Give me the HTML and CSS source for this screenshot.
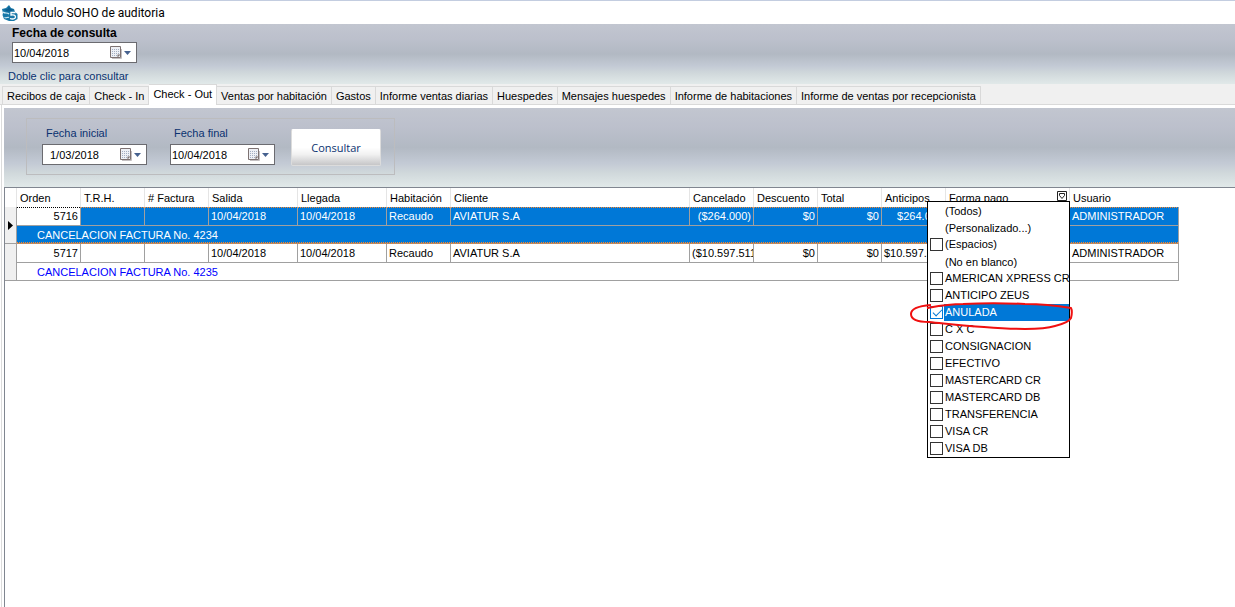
FILE: index.html
```html
<!DOCTYPE html>
<html lang="es">
<head>
    <meta charset="UTF-8">
    <meta name="viewport" content="width=device-width, initial-scale=1.0">
    <title>Modulo SOHO de auditoria</title>
    <link rel="stylesheet" href="styles.css">
</head>
<body>

    <!-- Shared icons -->
    <svg class="sprite" aria-hidden="true">
        <symbol id="icon-calendar" viewBox="0 0 12 13">
            <path d="M2 12.500h9.500V3" fill="none" stroke="#c4c0c2"/>
            <path d="M.5.5h10v11H.5z" fill="#eef0f5" stroke="#7d7272"/>
            <path d="M2 3.500h7M2 5.500h7M2 7.500h7M2 9.500h5" stroke="#a3aec2" stroke-dasharray="1 1"/>
            <path d="M10.500 8.500h-3v3z" fill="#7d7272"/>
        </symbol>
        <symbol id="icon-arrow" viewBox="0 0 7 4">
            <path d="M0 0h7L3.500 4z" fill="#45618f"/>
        </symbol>
    </svg>

    <header class="title-bar">
        <svg class="logo" viewBox="0 0 16 16" aria-hidden="true">
            <path d="M7 0l2 3 3 1 1 3 2.500 2v5L12 16H7l-5-2-1.500-4L1 8 0 4l4-1z" fill="#1878a8"/>
            <path d="M7 1.500L8.500 4l3 .500L9 6.500H5l-3-2L5.500 4z" fill="#0c5f92"/>
            <path d="M1 7c2 2 4 0 6 2M2.500 12.500c2 1 3-1 4.500 0" fill="none" stroke="#d5edf6" stroke-width="1.200"/>
            <path d="M13.500 7.500H9v2.500c2.500-.500 4.500 0 4.500 2s-3 2.500-5.500 1.500" fill="none" stroke="#fff" stroke-width="1.300"/>
        </svg>
        <h1>Modulo SOHO de auditoria</h1>
    </header>

    <section class="query-bar">
        <label class="query-label" for="query-date">Fecha de consulta</label>
        <div class="date-box wide">
            <input type="text" id="query-date" value="10/04/2018">
            <button type="button" aria-label="Abrir calendario">
                <svg class="calendar"><use href="#icon-calendar"/></svg>
                <svg class="arrow"><use href="#icon-arrow"/></svg>
            </button>
        </div>
        <p class="hint">Doble clic para consultar</p>
    </section>

    <nav class="tabs">
        <button type="button">Recibos de caja</button>
        <button type="button">Check - In</button>
        <button type="button" class="active">Check - Out</button>
        <button type="button">Ventas por habitación</button>
        <button type="button">Gastos</button>
        <button type="button">Informe ventas diarias</button>
        <button type="button">Huespedes</button>
        <button type="button">Mensajes huespedes</button>
        <button type="button">Informe de habitaciones</button>
        <button type="button">Informe de ventas por recepcionista</button>
    </nav>

    <main class="tab-page">
        <section class="filter-bar">
            <form class="filter-box">
                <div class="field">
                    <label for="start-date">Fecha inicial</label>
                    <div class="date-box">
                        <input type="text" id="start-date" class="short-date" value="1/03/2018">
                        <button type="button" aria-label="Abrir calendario">
                            <svg class="calendar"><use href="#icon-calendar"/></svg>
                            <svg class="arrow"><use href="#icon-arrow"/></svg>
                        </button>
                    </div>
                </div>
                <div class="field">
                    <label for="end-date">Fecha final</label>
                    <div class="date-box">
                        <input type="text" id="end-date" value="10/04/2018">
                        <button type="button" aria-label="Abrir calendario">
                            <svg class="calendar"><use href="#icon-calendar"/></svg>
                            <svg class="arrow"><use href="#icon-arrow"/></svg>
                        </button>
                    </div>
                </div>
                <button type="button" class="search-button">Consultar</button>
            </form>
        </section>

        <section class="grid">
            <table>
                <colgroup>
                    <col class="col-mark">
                    <col class="col-small">
                    <col class="col-small">
                    <col class="col-small">
                    <col class="col-date">
                    <col class="col-date">
                    <col class="col-small">
                    <col class="col-client">
                    <col class="col-small">
                    <col class="col-small">
                    <col class="col-small">
                    <col class="col-small">
                    <col class="col-payment">
                    <col class="col-user">
                </colgroup>
                <thead>
                    <tr>
                        <th></th>
                        <th>Orden</th>
                        <th>T.R.H.</th>
                        <th># Factura</th>
                        <th>Salida</th>
                        <th>Llegada</th>
                        <th>Habitación</th>
                        <th>Cliente</th>
                        <th>Cancelado</th>
                        <th>Descuento</th>
                        <th>Total</th>
                        <th>Anticipos</th>
                        <th class="has-filter">
                            Forma pago
                            <button type="button" class="filter-button" aria-label="Filtrar">
                                <svg viewBox="0 0 10 10"><path d="M.5.5h9v9h-9z" fill="#fff" stroke="#222"/><path d="M2.500 2.500h5v2L5 7.500 2.500 4.500z" fill="none" stroke="#222"/></svg>
                            </button>
                            <!-- Payment filter -->
                            <div class="filter-menu">
                                <button type="button" class="option">(Todos)</button>
                                <button type="button" class="option">(Personalizado...)</button>
                                <label class="option"><input type="checkbox"><span>(Espacios)</span></label>
                                <button type="button" class="option">(No en blanco)</button>
                                <label class="option"><input type="checkbox"><span>AMERICAN XPRESS CR</span></label>
                                <label class="option"><input type="checkbox"><span>ANTICIPO ZEUS</span></label>
                                <label class="option selected"><input type="checkbox" checked><span>ANULADA</span></label>
                                <label class="option"><input type="checkbox"><span>C X C</span></label>
                                <label class="option"><input type="checkbox"><span>CONSIGNACION</span></label>
                                <label class="option"><input type="checkbox"><span>EFECTIVO</span></label>
                                <label class="option"><input type="checkbox"><span>MASTERCARD CR</span></label>
                                <label class="option"><input type="checkbox"><span>MASTERCARD DB</span></label>
                                <label class="option"><input type="checkbox"><span>TRANSFERENCIA</span></label>
                                <label class="option"><input type="checkbox"><span>VISA CR</span></label>
                                <label class="option"><input type="checkbox"><span>VISA DB</span></label>
                                <svg class="red-mark" viewBox="0 0 164 30" aria-hidden="true">
                                    <path d="M22 4C9 5 2 8 2 13c0 6 8 8 18 8 20 2 35 4 55 5 25 2 55 4 71-1 8-2 14-4 16-8 1-4 1-8 0-10-12-2-30-4-46-4-20-1-43-1-62 0-15 0-25 2-36 4" fill="none" stroke="#f01010" stroke-width="2" stroke-linejoin="round"/>
                                </svg>
                            </div>
                        </th>
                        <th>Usuario</th>
                    </tr>
                </thead>
                <tbody class="current">
                    <tr>
                        <td class="mark" rowspan="2"><svg viewBox="0 0 5 9"><path d="M0 0l5 4.500L0 9z"/></svg></td>
                        <td class="number focused">5716</td>
                        <td></td>
                        <td></td>
                        <td>10/04/2018</td>
                        <td>10/04/2018</td>
                        <td>Recaudo</td>
                        <td>AVIATUR S.A</td>
                        <td class="number">($264.000)</td>
                        <td class="number">$0</td>
                        <td class="number">$0</td>
                        <td class="number">$264.000</td>
                        <td></td>
                        <td>ADMINISTRADOR</td>
                    </tr>
                    <tr>
                        <td class="memo" colspan="13">CANCELACION FACTURA No. 4234</td>
                    </tr>
                </tbody>
                <tbody>
                    <tr>
                        <td class="mark" rowspan="2"></td>
                        <td class="number">5717</td>
                        <td></td>
                        <td></td>
                        <td>10/04/2018</td>
                        <td>10/04/2018</td>
                        <td>Recaudo</td>
                        <td>AVIATUR S.A</td>
                        <td>($10.597.511)</td>
                        <td class="number">$0</td>
                        <td class="number">$0</td>
                        <td>$10.597.511</td>
                        <td></td>
                        <td>ADMINISTRADOR</td>
                    </tr>
                    <tr>
                        <td class="memo" colspan="13">CANCELACION FACTURA No. 4235</td>
                    </tr>
                </tbody>
            </table>
        </section>
    </main>

</body>
</html>
```
FILE: styles.css
```css
:root {
    --blue: #0078d7;
    --navy: #0a3270;
    --line: #a0a0a0;
    --face: #f0f0f0;
    --focus: #ff8728;
    --steel: linear-gradient(#c2c6d0, #bcc0cc 25%, #b2b9c3 50%, #c3cad5 70%, #d0d8db 82%, #e1e9e9);
}

* {
    margin: 0;
    padding: 0;
    box-sizing: border-box;
}

body {
    display: flex;
    flex-direction: column;
    min-height: 100vh;
    background: white;
    color: black;
    font-family: "Liberation Sans", Arial, sans-serif;
    font-size: 11px;
    line-height: 14px;
}

button,
input {
    font: inherit;
    color: inherit;
    border: none;
    border-radius: 0;
    background: none;
}

.sprite {
    position: absolute;
    width: 0;
    height: 0;
}

/* Title */
.title-bar {
    display: flex;
    align-items: center;
    gap: 5px;
    height: 24px;
    padding-left: 2px;
    border-top: 1px solid #c3cde0;
}

.title-bar h1 {
    font-family: Roboto, sans-serif;
    font-size: 12px;
    font-weight: 400;
}

.logo {
    width: 16px;
    height: 16px;
}

/* Date of the query */
.query-bar {
    height: 60px;
    padding: 2px 12px 0;
    background: var(--steel);
}

.query-label {
    display: block;
    height: 16px;
    font-size: 12px;
    font-weight: 700;
}

.date-box {
    display: flex;
    align-items: center;
    justify-content: space-between;
    width: 105px;
    height: 21px;
    padding: 0 5px 0 1px;
    background: white;
    border: 1px solid #6b6b70;
}

.date-box.wide {
    width: 125px;
}

.date-box input {
    width: 70px;
    height: 19px;
    outline: none;
}

.date-box .short-date {
    padding-left: 6px;
}

.date-box button {
    display: flex;
    align-items: center;
    gap: 2px;
}

.calendar {
    width: 12px;
    height: 13px;
}

.arrow {
    width: 7px;
    height: 4px;
}

.hint {
    margin: 6px 0 0 -4px;
    color: var(--navy);
}

/* Tabs */
.tabs {
    display: flex;
    align-items: flex-end;
    height: 21px;
    padding-left: 2px;
    background: var(--face);
    border-bottom: 1px solid #d9d9d9;
}

.tabs button {
    height: 18px;
    padding: 0 4px;
    border: 1px solid #d9d9d9;
    border-width: 1px 1px 0 0;
    white-space: nowrap;
}

.tabs button:first-child {
    border-left-width: 1px;
}

.tabs .active {
    height: 21px;
    margin-bottom: -1px;
    padding-bottom: 3px;
    background: white;
}

.tab-page {
    display: flex;
    flex-direction: column;
    flex: 1;
    margin-left: 1px;
    padding: 3px 0 0 2px;
    border-left: 1px solid #dcdcdc;
}

/* Range of dates */
.filter-bar {
    height: 79px;
    padding: 10px 22px;
    background: var(--steel);
}

.filter-box {
    display: flex;
    gap: 23px;
    width: 369px;
    height: 57px;
    padding: 7px 15px;
    border: 1px solid #bcbcbe;
}

.field label {
    display: block;
    height: 18px;
    padding-left: 4px;
    color: var(--navy);
}

.search-button {
    flex: none;
    width: 90px;
    height: 37px;
    margin: 3px 0 0 -7px;
    border: 1px solid #dcdcdc;
    border-top-color: white;
    border-radius: 2px;
    background: linear-gradient(white 50%, #f1f1f1 70%, #c6c6c8);
    color: var(--navy);
    font-family: "Open Sans", sans-serif;
}

/* Grid */
.grid {
    flex: 1;
    border: 1px solid #808690;
    border-width: 1px 0 0 1px;
}

table {
    width: 1174px;
    table-layout: fixed;
    border-collapse: separate;
    border-spacing: 0;
}

.col-mark {
    width: 12px;
}

.col-small {
    width: 64px;
}

.col-date {
    width: 89px;
}

.col-client {
    width: 239px;
}

.col-payment {
    width: 124px;
}

.col-user {
    width: 109px;
}

th,
td {
    overflow: hidden;
    white-space: nowrap;
    line-height: 16px;
    vertical-align: middle;
}

th {
    height: 19px;
    padding: 0 3px;
    border-right: 1px solid #e5e5e5;
    font-weight: 400;
    text-align: left;
}

th:last-child {
    border-right-color: transparent;
}

td {
    height: 19px;
    padding: 0 2px;
    border-right: 1px solid var(--line);
    border-bottom: 1px solid var(--line);
}

.number {
    text-align: right;
}

.mark {
    padding: 0 3px;
    background: var(--face);
}

.mark svg {
    display: block;
    width: 5px;
    height: 9px;
}

.memo {
    height: 18px;
    padding-left: 20px;
    color: blue;
}

/* Selected record, with a dotted focus line above and below it */
.current td:not(.mark) {
    background: repeating-linear-gradient(90deg, var(--focus) 0 1px, transparent 1px 2px) top / 100% 1px no-repeat var(--blue);
    color: white;
}

.current .focused:not(.mark) {
    background: repeating-linear-gradient(90deg, black 0 1px, transparent 1px 2px) top / 100% 1px no-repeat white;
    color: black;
}

.current .memo:not(.mark) {
    background-position: bottom;
    border-bottom-color: #c08a60;
}

/* Filter menu */
.has-filter {
    position: relative;
    overflow: visible;
}

.filter-button {
    position: absolute;
    top: 3px;
    right: 2px;
    width: 10px;
    height: 10px;
}

.filter-button svg {
    display: block;
}

.filter-menu {
    position: absolute;
    top: 13px;
    right: -1px;
    z-index: 5;
    width: 143px;
    background: white;
    border: 1px solid black;
}

.option {
    display: flex;
    align-items: center;
    width: 100%;
    height: 17px;
    padding-left: 2px;
}

button.option {
    padding-left: 17px;
}

.option span {
    flex: 1;
    height: 17px;
    margin-left: 1px;
    padding-left: 1px;
}

.option input {
    appearance: none;
    flex: none;
    width: 13px;
    height: 13px;
    background: white;
    border: 1px solid #333;
}

.option input:checked {
    position: relative;
    border-color: var(--blue);
}

.option input:checked::after {
    content: "";
    position: absolute;
    top: 0;
    left: 4px;
    width: 4px;
    height: 8px;
    border: solid var(--blue);
    border-width: 0 1px 1px 0;
    transform: rotate(45deg);
}

.option.selected span {
    background: var(--blue);
    color: white;
}

.red-mark {
    position: absolute;
    top: 99px;
    left: -19px;
    width: 164px;
    height: 30px;
    pointer-events: none;
}
```
